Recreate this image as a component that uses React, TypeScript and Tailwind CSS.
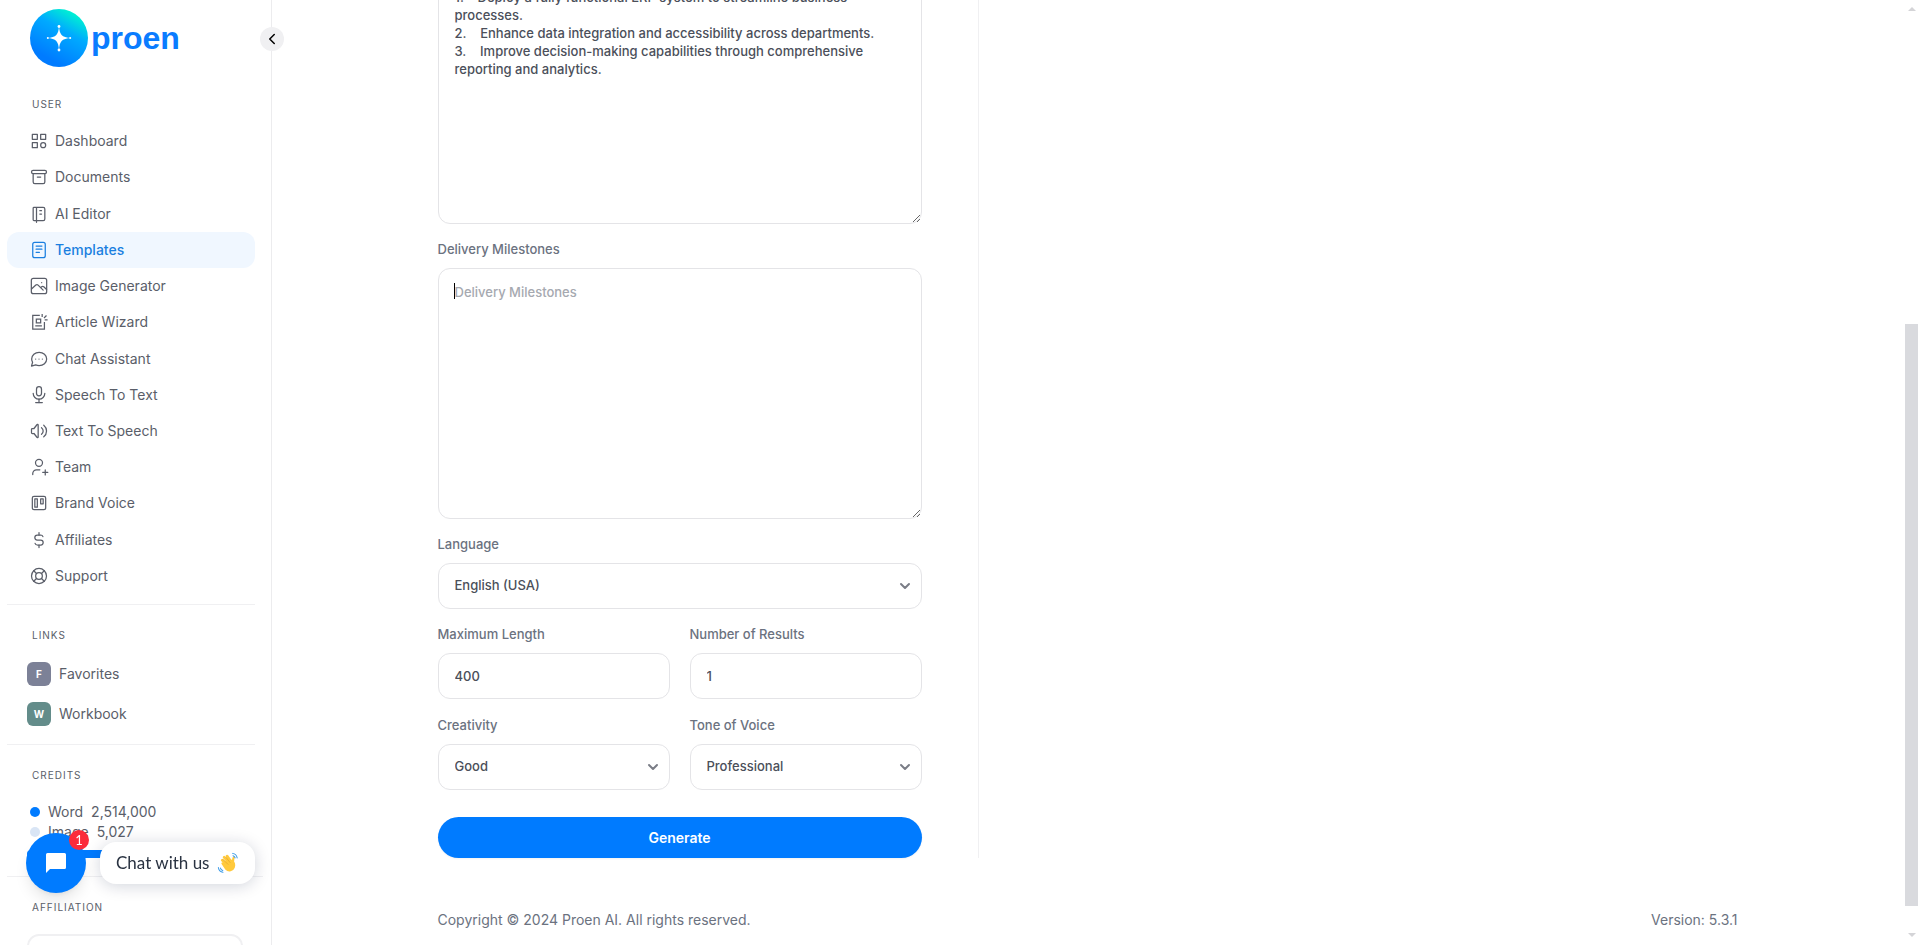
import React, { ReactNode } from "react"
import {
  TbArchive,
  TbBrandTrello,
  TbCategory,
  TbChevronDown,
  TbChevronLeft,
  TbCurrencyDollar,
  TbLifebuoy,
  TbMicrophone,
  TbNotebook,
  TbVolume,
} from "react-icons/tb"
import clsx from "clsx"

type IconProps = { children: ReactNode }

function Icon({ children }: IconProps) {
  return (
    <svg
      viewBox="0 0 24 24"
      fill="none"
      stroke="currentColor"
      strokeWidth="1.5"
      strokeLinecap="round"
      strokeLinejoin="round"
      className="size-5"
    >
      {children}
    </svg>
  )
}

const TemplateIcon = () => (
  <Icon>
    <rect x="4.5" y="2.8" width="15" height="18.4" rx="2.4" />
    <path d="M8.5 7.2h7M8.5 11h7M8.5 14.8h4" />
  </Icon>
)

const PictureIcon = () => (
  <Icon>
    <rect x="2.8" y="2.8" width="18.4" height="18.4" rx="2.4" />
    <path d="M3 15.5l5.200-4.600c.9-.8 1.900-.8 2.700 0l6.100 6.100M14 14l1.200-1.100c.8-.7 1.700-.7 2.500 0l3.400 3.300M15.200 8h.01" />
  </Icon>
)

const WizardIcon = () => (
  <Icon>
    <path
      strokeLinecap="butt"
      strokeLinejoin="miter"
      d="M13 4H4.500v16.500h14V12M8.800 8.500h5.200v4.500H8.800zM7.500 16.500h8M15.800 2.500v3.500M21 4.200l-3 3M18.800 9.500h3.500"
    />
  </Icon>
)

const ChatIcon = () => (
  <Icon>
    <path d="M3 20.500l1.300-4.600A8.200 7.800 0 0 1 3.200 12C3.200 7.400 7.200 4 12.200 4s9 3.500 9 8-4 8-9 8a9.800 9.800 0 0 1-4.200-.9z" />
    <path d="M8 12h.01M12 12h.01M16 12h.01" />
  </Icon>
)

const TeamIcon = () => (
  <Icon>
    <circle cx="12" cy="7" r="4.200" />
    <path d="M4.500 21v-1.200A4.500 4.500 0 0 1 9 15.300h4M19.500 15.500v6M16.500 18.500h6" />
  </Icon>
)

const outline = "size-5 stroke-[1.5]"

const navItems = [
  { name: "Dashboard", icon: <TbCategory className={outline} /> },
  { name: "Documents", icon: <TbArchive className={outline} /> },
  { name: "AI Editor", icon: <TbNotebook className={outline} /> },
  { name: "Templates", icon: <TemplateIcon />, active: true },
  { name: "Image Generator", icon: <PictureIcon /> },
  { name: "Article Wizard", icon: <WizardIcon /> },
  { name: "Chat Assistant", icon: <ChatIcon /> },
  { name: "Speech To Text", icon: <TbMicrophone className={outline} /> },
  { name: "Text To Speech", icon: <TbVolume className={outline} /> },
  { name: "Team", icon: <TeamIcon /> },
  { name: "Brand Voice", icon: <TbBrandTrello className={outline} /> },
  { name: "Affiliates", icon: <TbCurrencyDollar className={outline} /> },
  { name: "Support", icon: <TbLifebuoy className={outline} /> },
]

const links = [
  { name: "Favorites", color: "bg-[#7c8197]" },
  { name: "Workbook", color: "bg-[#638c8a]" },
]

const goals = `1.    Deploy a fully functional ERP system to streamline business processes.
2.    Enhance data integration and accessibility across departments.
3.    Improve decision-making capabilities through comprehensive reporting and analytics.`

function SectionTitle({ children }: { children: ReactNode }) {
  return (
    <h2 className="pl-8 text-[10px] leading-4 tracking-widest uppercase">
      {children}
    </h2>
  )
}

function Logo() {
  return (
    <a href="#" className="flex items-center gap-[3px] pl-[30px]">
      <svg viewBox="0 0 58 58" className="size-[58px]">
        <defs>
          <linearGradient id="logo" x1="0.85" y1="0.1" x2="0.4" y2="0.9">
            <stop offset="0" stopColor="#00f5d0" />
            <stop offset="0.4" stopColor="#00aaff" />
            <stop offset="1" stopColor="#007bff" />
          </linearGradient>
        </defs>
        <circle cx="29" cy="29" r="29" fill="url(#logo)" />
        <path
          d="M29 17c.6 8.500 2.500 11.400 12 12-9.500.6-11.400 3.500-12 12-.6-8.500-2.500-11.400-12-12 9.500-.6 11.400-3.500 12-12z"
          fill="#fff"
        />
        <g fill="#fff">
          <circle cx="29" cy="17.500" r="1.400" />
          <circle cx="29" cy="41" r="1.400" />
          <circle cx="17.800" cy="29" r="1" />
          <circle cx="40.200" cy="29" r="1" />
        </g>
      </svg>
      <span className="font-['Liberation_Sans',sans-serif] text-[32px] leading-10 font-bold text-[#0a7cff]">
        proen
      </span>
    </a>
  )
}

function Sidebar() {
  return (
    <aside className="relative w-68 shrink-0 border-r border-[#ececee] pt-[9px] text-[#5a5e69]">
      <Logo />
      <button
        aria-label="Collapse sidebar"
        className="absolute top-[27px] -right-[13px] flex size-6 items-center justify-center rounded-full bg-[#f0f0f2] text-black"
      >
        <TbChevronLeft className="size-[18px]" />
      </button>
      <div className="mt-[29px]">
        <SectionTitle>User</SectionTitle>
      </div>
      <nav className="mt-[11px] mr-4 ml-[7px] flex h-[471px] flex-col">
        {navItems.map((item) => (
          <a
            key={item.name}
            href="#"
            className={clsx(
              "flex flex-1 items-center gap-1.5 rounded-xl pl-[22px] text-sm",
              item.active && "bg-[#f0f7ff] font-medium text-[#1a7fe0]"
            )}
          >
            {item.icon}
            {item.name}
          </a>
        ))}
      </nav>
      <hr className="mt-[10px] mr-4 ml-[7px] border-[#f0f0f2]" />
      <div className="mt-[22px]">
        <SectionTitle>Links</SectionTitle>
      </div>
      <div className="mt-[19px] flex flex-col gap-4 pl-[27px]">
        {links.map((link) => (
          <a key={link.name} href="#" className="flex items-center gap-2 text-sm">
            <span
              className={clsx(
                "flex size-6 items-center justify-center rounded-md text-[10px] leading-4 font-bold text-white",
                link.color
              )}
            >
              {link.name[0]}
            </span>
            <span className="h-5">{link.name}</span>
          </a>
        ))}
      </div>
      <hr className="mt-[18px] mr-4 ml-[7px] border-[#f0f0f2]" />
      <div className="mt-[22px]">
        <SectionTitle>Credits</SectionTitle>
      </div>
      <div className="mt-[19px] pl-[30px] text-sm">
        <p className="flex items-center">
          <span className="mr-2 size-2.5 rounded-full bg-[#007bff]" />
          Word <span className="ml-2">2,514,000</span>
        </p>
        <p className="flex items-center">
          <span className="mr-2 size-2.5 rounded-full bg-[#d9e5f5]" />
          Image <span className="ml-2">5,027</span>
        </p>
      </div>
      <div className="mt-2 mr-7 ml-[27px] h-2 rounded-full bg-[#007bff]" />
      <hr className="mt-[18px] mr-2 ml-[7px] border-[#f0f0f2]" />
      <div className="mt-[22px]">
        <SectionTitle>Affiliation</SectionTitle>
      </div>
      <div className="mt-[19px] mr-7 ml-[27px] h-40 rounded-xl border-2 border-[#f0f0f2]" />
    </aside>
  )
}

type FieldProps = { id: string; label: string; children: ReactNode }

function Field({ id, label, children }: FieldProps) {
  return (
    <div>
      <label
        htmlFor={id}
        className="mb-[9px] block text-[13px] leading-5 font-medium text-[#6b7280]"
      >
        {label}
      </label>
      {children}
    </div>
  )
}

const control =
  "block w-full rounded-xl border border-[#e4e4e7] bg-white px-4 text-[13px] font-medium text-[#4b4f5a] outline-none"
const area = clsx(control, "h-[251px] resize pt-3.5 leading-[18px] placeholder:text-[#a6a9b0]")

function Select({ id, value }: { id: string; value: string }) {
  return (
    <div className="relative">
      <select id={id} className={clsx(control, "h-[46px] appearance-none")}>
        <option>{value}</option>
      </select>
      <TbChevronDown className="pointer-events-none absolute top-[15px] right-[9px] size-4 stroke-[3] text-[#7a7d86]" />
    </div>
  )
}

function GeneratorForm() {
  return (
    <form className="flex w-[541px] flex-col gap-[15px] border-r border-[#f0f0f2] pr-14">
      <Field id="goals" label="Project Goals">
        <textarea id="goals" className={area} defaultValue={goals} />
      </Field>
      <Field id="milestones" label="Delivery Milestones">
        <div className="relative">
          <textarea
            id="milestones"
            className={clsx(area, "caret-transparent")}
            placeholder="Delivery Milestones"
          />
          <span className="absolute top-[15px] left-4 h-4 w-px bg-black" />
        </div>
      </Field>
      <Field id="language" label="Language">
        <Select id="language" value="English (USA)" />
      </Field>
      <div className="grid grid-cols-2 gap-x-5 gap-y-4">
        <Field id="length" label="Maximum Length">
          <input id="length" className={clsx(control, "h-[46px]")} defaultValue="400" />
        </Field>
        <Field id="results" label="Number of Results">
          <input id="results" className={clsx(control, "h-[46px]")} defaultValue="1" />
        </Field>
        <Field id="creativity" label="Creativity">
          <Select id="creativity" value="Good" />
        </Field>
        <Field id="tone" label="Tone of Voice">
          <Select id="tone" value="Professional" />
        </Field>
      </div>
      <button
        type="button"
        className="mt-3 h-[41px] rounded-full bg-[#007bff] text-sm font-semibold text-white shadow-xs"
      >
        Generate
      </button>
    </form>
  )
}

function ChatWidget() {
  return (
    <div className="fixed bottom-[52px] left-[26px] flex items-center gap-3.5">
      <button
        aria-label="Open chat"
        className="relative flex size-[60px] items-center justify-center rounded-full bg-[#007bff] shadow-lg"
      >
        <svg viewBox="0 0 20 20" className="size-5" fill="#fff">
          <path d="M1.500 0h17A1.500 1.500 0 0 1 20 1.500v13a1.500 1.500 0 0 1-1.500 1.500H4l-4 4V1.500A1.500 1.500 0 0 1 1.500 0z" />
        </svg>
        <span className="absolute -top-[3px] -right-[3px] size-5 rounded-full bg-[#fb2c3b] font-['Lato',sans-serif] text-[13px] leading-5 text-white">
          1
        </span>
      </button>
      <button className="flex h-[42px] items-center gap-2 rounded-2xl bg-white px-4 font-['Lato',sans-serif] text-[17px] text-[#2a3342] shadow-[0_2px_16px_rgba(0,20,60,0.18)]">
        Chat with us
        <svg viewBox="0 0 24 24" className="size-[22px]">
          {/* fingers, thumb, palm, then the motion marks */}
          <path
            d="M12 14.500L5.800 9M14 12.500L7.800 5.800M15.500 11L11 4.500"
            fill="none"
            stroke="#ffc93c"
            strokeWidth="3"
            strokeLinecap="round"
          />
          <path
            d="M17 13c.8-2 .2-4.500 1.200-6.800"
            fill="none"
            stroke="#ffc93c"
            strokeWidth="2.400"
            strokeLinecap="round"
          />
          <path
            d="M5 13c-.8-1.300.9-2.500 2-1.500L15 8l4 3c1.300 2.500 1.300 6-.8 8.200-2.600 2.700-6.600 2.600-9.200-.2z"
            fill="#ffc93c"
          />
          <path
            d="M6.500 8l5.500 5.500M9.500 5.500l4.800 6"
            fill="none"
            stroke="#e0a02a"
            strokeWidth=".7"
            strokeLinecap="round"
          />
          <path
            d="M17 1.500c2.800.5 4.500 2.300 5 5M17.500 4c1.200.4 2 1.200 2.300 2.400M1.500 17c.5 2.800 2.300 4.700 5 5.200M3.800 17.500c.3 1.400 1.200 2.300 2.500 2.700"
            fill="none"
            stroke="#3b9be8"
            strokeWidth="1.100"
            strokeLinecap="round"
          />
        </svg>
      </button>
    </div>
  )
}

function Scrollbar() {
  return (
    <div className="flex w-[17px] shrink-0 flex-col items-center pt-[7px] pb-2">
      <svg viewBox="0 0 8 4" className="h-1 w-2" fill="#d4d4d7">
        <path d="M0 4l4-4 4 4z" />
      </svg>
      <div className="mb-[27px] flex w-full flex-1 flex-col justify-end px-0.5">
        <div className="h-[65%] bg-[#d9dade]" />
      </div>
      <svg viewBox="0 0 8 4" className="h-1 w-2" fill="#d4d4d7">
        <path d="M0 0l4 4 4-4z" />
      </svg>
    </div>
  )
}

function App() {
  return (
    <div className="flex h-screen overflow-hidden bg-white font-['Inter',sans-serif]">
      <Sidebar />
      {/* the view rests at the end of the page, so the top of the form is cut off */}
      <main className="flex flex-1 flex-col justify-end">
        <div className="mx-auto w-full max-w-[1300px]">
          <GeneratorForm />
          <footer className="mt-[52px] mb-[15px] flex justify-between text-sm text-[#6b7280]">
            <p>Copyright © 2024 Proen AI. All rights reserved.</p>
            <p>Version: 5.3.1</p>
          </footer>
        </div>
      </main>
      <Scrollbar />
      <ChatWidget />
    </div>
  )
}

export default App
